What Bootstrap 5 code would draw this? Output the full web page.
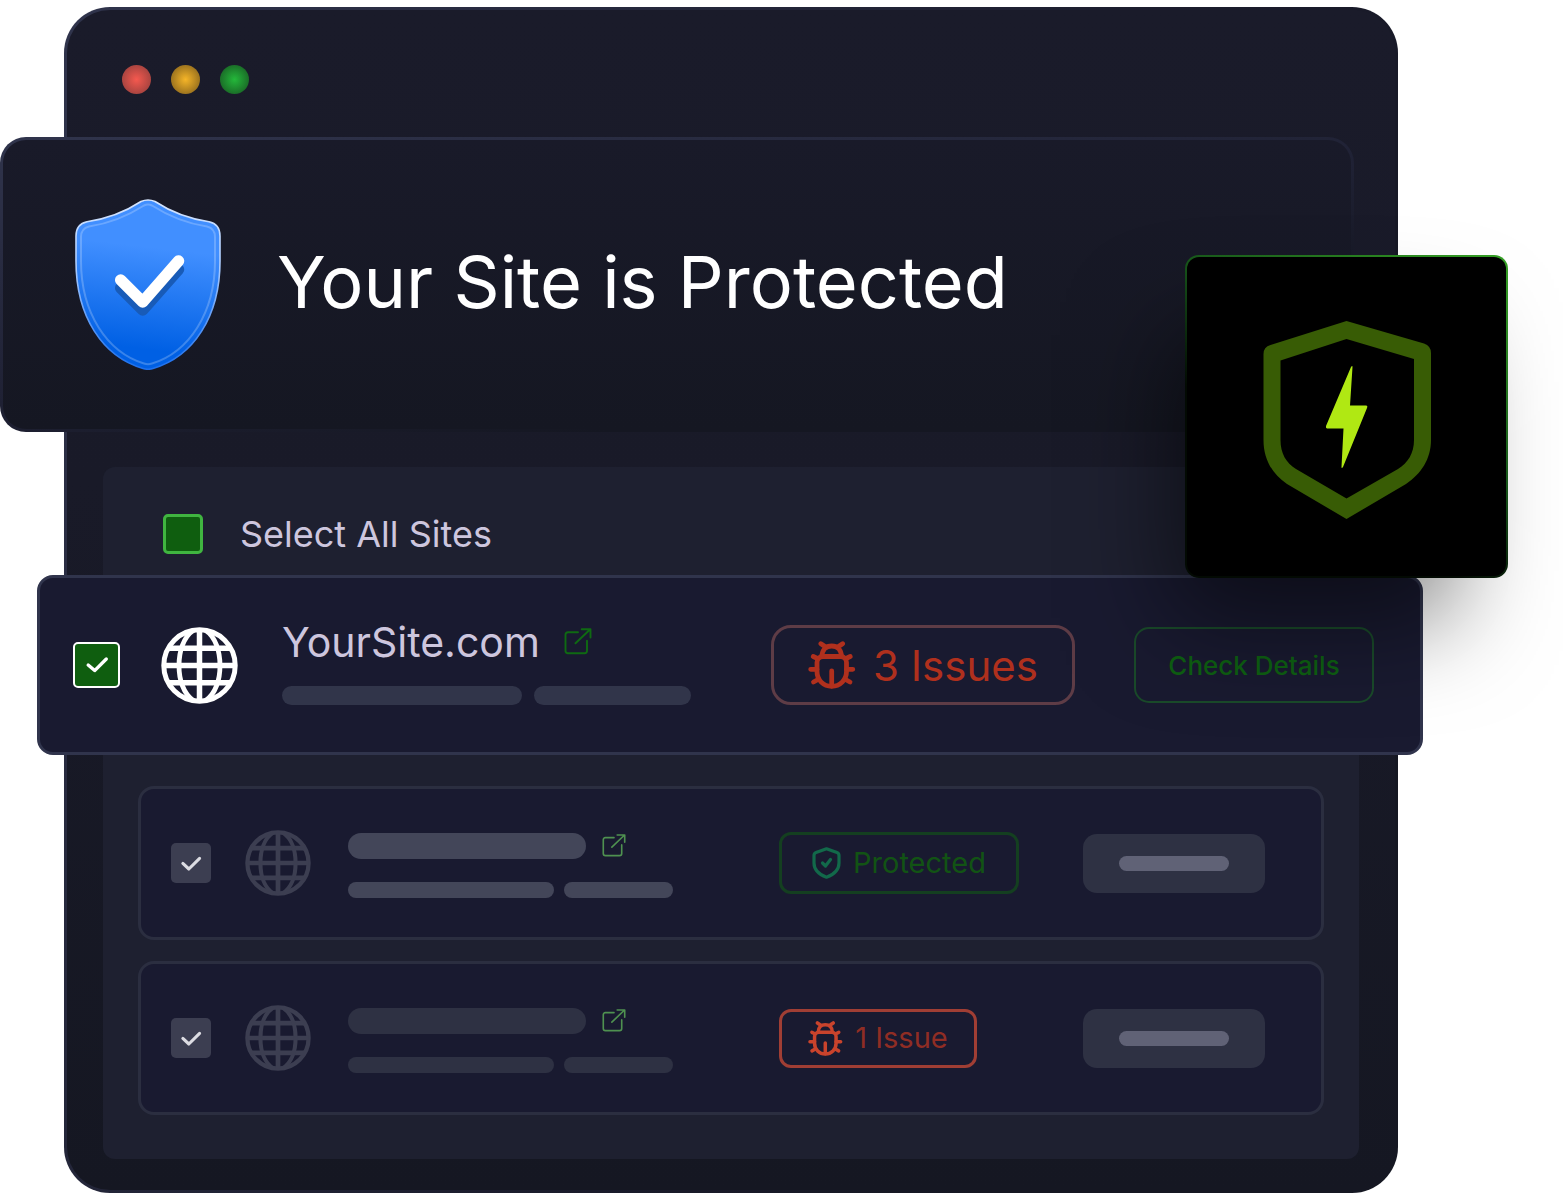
<!DOCTYPE html>
<html lang="en">
<head>
<meta charset="utf-8">
<meta name="viewport" content="width=device-width, initial-scale=1">
<title>Your Site is Protected</title>
<link href="https://cdn.jsdelivr.net/npm/bootstrap@5.3.0/dist/css/bootstrap.min.css" rel="stylesheet">
<style>
  body { font-family: Inter, "Liberation Sans", sans-serif; background: #fff; overflow-x: hidden; }
  .stage { padding: 7px 165px 7px 64px; }

  .app-window {
    border: 3px solid transparent; border-radius: 46px; padding-bottom: 31px;
    background: linear-gradient(180deg, #1a1b2a, #191a28 40%, #151722) padding-box,
                linear-gradient(120deg, #30344c, #1a1b2b 60%, #151722 80%) border-box;
  }
  .title-bar { padding: 55px 55px 43px; gap: 20px; }
  .dot { width: 29px; height: 29px; border-radius: 50%; }
  .dot-red { background: radial-gradient(circle, #f5594f, #a5433f 75%); }
  .dot-amber { background: radial-gradient(circle, #f5b528, #98701e 75%); }
  .dot-green { background: radial-gradient(circle, #24b83a, #1a6a27 75%); }

  .banner {
    height: 295px; margin: 0 41px 0 -67px; padding: 0 72px; gap: 56px;
    border: 3px solid transparent; border-radius: 26px;
    background: linear-gradient(180deg, #191a29, #151722) padding-box,
                linear-gradient(170deg, #30344c, #1f2134 50%, #151722 75%) border-box;
  }
  .banner h1 { font-size: 72px; line-height: 80px; font-weight: 400; color: #fff; padding-bottom: 6px; }

  .panel { margin: 35px 36px 0; padding-bottom: 44px; border-radius: 12px; background: #1e2030; }
  .select-all { height: 108px; padding: 26px 60px 0; gap: 37px; font-size: 36px; line-height: 42px; color: #cdc6de; }

  .site { border: 3px solid #2b2e40; border-radius: 16px; background: #191a30; }
  .site-main { height: 180px; margin: 0 -64px 31px -66px; padding: 0 46px 0 33px; border-color: #30344c; }
  .site-sub { height: 154px; margin: 0 35px; padding: 0 56px 0 30px; }
  .site-sub + .site-sub { margin-top: 21px; }

  .tick {
    appearance: none; flex: none; width: 40px; height: 40px; margin: 0; border-radius: 5px;
    background: #3c3e51 center / 60% no-repeat;
  }
  .tick:checked { background-image: url("data:image/svg+xml,%3Csvg xmlns='http://www.w3.org/2000/svg' viewBox='0 0 28 28'%3E%3Cpath d='M4.500 14.500L11.500 21L24 8.500' fill='none' stroke='%23dcdce2' stroke-width='3.600' stroke-linecap='round' stroke-linejoin='round'/%3E%3C/svg%3E"); }
  .tick-all { border: 3px solid #40b540; background-color: #0f5e0f; }
  .tick-main { width: 47px; height: 46px; border: 2px solid #fff; background-color: #0f5e0f; }
  .tick-main:checked { background-image: url("data:image/svg+xml,%3Csvg xmlns='http://www.w3.org/2000/svg' viewBox='0 0 28 28'%3E%3Cpath d='M4.500 14L11.500 20L24 7.500' fill='none' stroke='%23fff' stroke-width='3.600' stroke-linecap='round' stroke-linejoin='round'/%3E%3C/svg%3E"); }

  .globe { flex: none; width: 66px; height: 66px; margin: 0 37px 0 34px; color: #3c3e51; }
  .site-main .globe { width: 77px; height: 77px; margin: 0 44px 0 41px; color: #fff; }
  .site-name { font-size: 41px; line-height: 50px; font-weight: 400; color: #cdc6de; }
  .open { display: flex; color: #4f9150; }
  .site-main .open { color: #0f6a12; }

  .bones { gap: 10px; margin-top: 23px; }
  .site-main .bones { gap: 12px; margin-top: 19px; }
  .bone { border-radius: 13px; background: #2e3143; }
  .bone-lit { background: #434659; }
  .site-main .bone { height: 19px; background: #31354a; }
  .bone-title { width: 238px; height: 26px; }
  .bone-a { width: 206px; height: 16px; }
  .bone-b { width: 109px; height: 16px; }
  .site-main .bone-a { width: 240px; }
  .site-main .bone-b { width: 157px; }

  .btn.tag { flex: none; display: flex; align-items: center; justify-content: center; padding: 0; white-space: nowrap; font-weight: 400; border-radius: 12px; }
  .btn.tag-issues { width: 304px; height: 80px; margin-right: 59px; gap: 17px; border: 3px solid #5e3c46; border-radius: 20px; font-size: 42px; color: #b0301d; }
  .btn.tag-details { width: 240px; height: 76px; border: 2px solid #1a4a2a; border-radius: 15px; font-size: 26px; font-weight: 500; color: #0e5f12; }
  .status { flex: none; width: 304px; }
  .btn.tag-ok { width: 240px; height: 62px; gap: 12px; border: 3px solid #143f20; font-size: 29px; color: #125314; }
  .btn.tag-warn { width: 198px; height: 59px; gap: 12px; border: 3px solid #a03e34; font-size: 29px; color: #902d24; }
  .btn.ghost { flex: none; width: 182px; height: 59px; padding: 0 36px; border: 0; border-radius: 14px; background: #2e3143; }
  .ghost span { height: 15px; border-radius: 8px; background: #606276; }

  .boost {
    top: 255px; right: 55px; width: 323px; height: 323px; padding-top: 6px;
    border: 2px solid transparent; border-radius: 14px;
    background: linear-gradient(#000, #000) padding-box,
                linear-gradient(215deg, #35a024, #17561a 42%, #030a03 65%) border-box;
    box-shadow: -34px 60px 100px -20px rgba(0, 0, 0, .52);
  }
</style>
</head>
<body>
<svg class="d-none" aria-hidden="true">
  <symbol id="globe" viewBox="0 0 77 77">
    <g fill="none" stroke="currentColor" stroke-width="5.500">
      <circle cx="38.500" cy="38.500" r="35.700" stroke-width="5"/>
      <path d="M38.500 2.500V74.500M2.500 38.500H74.500M7 21.200H70M7 55.800H70"/>
      <path stroke-width="4.800" d="M33 3C22 10 18 25 18 38.500S22 67 33 74M44 3C55 10 59 25 59 38.500S55 67 44 74"/>
    </g>
  </symbol>
  <symbol id="bug" viewBox="0 0 48 48">
    <g fill="none" stroke="currentColor" stroke-width="4.800" stroke-linecap="round" stroke-linejoin="round">
      <path d="M15 15.500H32.500C36 15.500 38.500 18 38.500 21.500V30.500C38.500 39 32 45.300 23.700 45.300S9 39 9 30.500V21.500C9 18 11.500 15.500 15 15.500Z"/>
      <path d="M14 15.500C14 8.500 18 5 23.700 5S33.400 8.500 33.400 15.500M12.900 2.700L17 5.500M34.600 2.700L30.500 5.500"/>
      <path d="M5.300 15.500L9.500 17.500M42.200 15.500L38 17.500M2.700 28.300H9M44.800 28.300H38.500M5.500 41L10 38.500M42 41L37.500 38.500M23.700 30V45"/>
    </g>
  </symbol>
  <symbol id="open" viewBox="0 0 28 28">
    <path fill="none" stroke="currentColor" stroke-width="1.900" stroke-linecap="round" stroke-linejoin="round" d="M14 4.300H4Q1.500 4.300 1.500 6.800V22.700Q1.500 25.200 4 25.200H20.500Q23 25.200 23 22.700V12.700M11.500 15.300L26.300 1.200M17.700 1.200H26.500V9.500"/>
  </symbol>
</svg>

<main class="stage position-relative">
  <section class="app-window">
    <div class="title-bar d-flex">
      <span class="dot dot-red"></span><span class="dot dot-amber"></span><span class="dot dot-green"></span>
    </div>

    <header class="banner d-flex align-items-center">
      <svg class="flex-shrink-0" width="146" height="171" viewBox="0 0 146 171" aria-hidden="true">
        <defs>
          <linearGradient id="blue" x1=".55" y1="0" x2=".45" y2="1"><stop offset=".28" stop-color="#418fff"/><stop offset=".88" stop-color="#0060e4"/></linearGradient>
          <linearGradient id="rim" x1="0" y1="0" x2="0" y2="1"><stop offset="0" stop-color="#d5e5ff"/><stop offset=".4" stop-color="#a9cbff"/><stop offset="1" stop-color="#1c6fec"/></linearGradient>
        </defs>
        <path fill="url(#blue)" stroke="url(#rim)" stroke-width="1.600" d="M66 2.500Q73 -.5 80 2.500C96 13 112 19.500 134 22.700Q145 25 145 37V62C145 118 118 158 78 169.500Q73 171 68 169.500C28 158 1 118 1 62V37Q1 25 12 22.700C34 19.500 50 13 66 2.500Z"/>
        <path fill="none" stroke="#fff" stroke-opacity=".22" stroke-width="2" d="M69 6.500Q73 4.500 77 6.500C95 18 112 24.500 132 27.500Q140 29.500 140 38V62C140 114 114 153 77 164.500Q73 166 69 164.500C32 153 6 114 6 62V38Q6 29.500 14 27.500C34 24.500 51 18 69 6.500Z"/>
        <g fill="none" stroke-width="11.500" stroke-linecap="round" stroke-linejoin="round">
          <path stroke="#185bb8" d="M45.700 89L67.700 111L103.500 70.500"/>
          <path stroke="#fff" d="M45.700 81L67.700 103L103.500 62"/>
        </g>
      </svg>
      <h1 class="m-0 text-nowrap">Your Site is Protected</h1>
    </header>

    <div class="panel">
      <div class="select-all d-flex align-items-center">
        <input class="tick tick-all" type="checkbox" id="all">
        <label for="all" class="text-nowrap">Select All Sites</label>
      </div>

      <article class="site site-main d-flex align-items-center">
        <input class="tick tick-main" type="checkbox" checked aria-label="YourSite.com">
        <svg class="globe" aria-hidden="true"><use href="#globe"/></svg>
        <div class="flex-grow-1 pb-2">
          <div class="d-flex align-items-center gap-4">
            <span class="site-name">YourSite.com</span>
            <a class="open" href="#" aria-label="Open site"><svg width="28" height="28"><use href="#open"/></svg></a>
          </div>
          <div class="bones d-flex"><span class="bone bone-a"></span><span class="bone bone-b"></span></div>
        </div>
        <button type="button" class="btn tag tag-issues"><svg width="48" height="48" aria-hidden="true"><use href="#bug"/></svg>3 Issues</button>
        <button type="button" class="btn tag tag-details">Check Details</button>
      </article>

      <article class="site site-sub d-flex align-items-center">
        <input class="tick" type="checkbox" checked aria-label="Second site">
        <svg class="globe" aria-hidden="true"><use href="#globe"/></svg>
        <div class="flex-grow-1 pt-1">
          <div class="d-flex align-items-center gap-3">
            <span class="bone bone-lit bone-title"></span>
            <a class="open" href="#" aria-label="Open site"><svg width="24" height="24"><use href="#open"/></svg></a>
          </div>
          <div class="bones d-flex"><span class="bone bone-lit bone-a"></span><span class="bone bone-lit bone-b"></span></div>
        </div>
        <div class="status">
          <button type="button" class="btn tag tag-ok">
            <svg width="29" height="32" viewBox="0 0 29 32" fill="none" stroke="#12694a" stroke-width="3.200" stroke-linejoin="round" stroke-linecap="round" aria-hidden="true"><path d="M14.500 1.800L25 5.500Q27 6.200 27 8.500V16C27 23.500 22 27.500 14.500 30.200C7 27.500 2 23.500 2 16V8.500Q2 6.200 4 5.500Z"/><path d="M10.500 16L13.500 19L18.500 12.500"/></svg>Protected</button>
        </div>
        <button type="button" class="btn ghost" aria-label="Details"><span class="d-block"></span></button>
      </article>

      <article class="site site-sub d-flex align-items-center">
        <input class="tick" type="checkbox" checked aria-label="Third site">
        <svg class="globe" aria-hidden="true"><use href="#globe"/></svg>
        <div class="flex-grow-1 pt-1">
          <div class="d-flex align-items-center gap-3">
            <span class="bone bone-title"></span>
            <a class="open" href="#" aria-label="Open site"><svg width="24" height="24"><use href="#open"/></svg></a>
          </div>
          <div class="bones d-flex"><span class="bone bone-a"></span><span class="bone bone-b"></span></div>
        </div>
        <div class="status">
          <button type="button" class="btn tag tag-warn"><svg width="35" height="35" color="#c9432c" aria-hidden="true"><use href="#bug"/></svg>1 Issue</button>
        </div>
        <button type="button" class="btn ghost" aria-label="Details"><span class="d-block"></span></button>
      </article>
    </div>
  </section>

  <aside class="boost position-absolute d-flex align-items-center justify-content-center">
    <svg width="168" height="198" viewBox="0 0 168 198" aria-hidden="true">
      <path fill="#385c05" fill-rule="evenodd" d="M83.500 0L161 22.500Q168 25 168 32V119C168 138 158 153 143 163L83.500 198L24 163C9 153 .5 138 .5 119V33Q.5 26 7.500 24ZM83.500 18L151 38V119C151 132 145 142 135 148L83.500 177.500L33 148C23 142 17.500 132 17.500 119V39.500Z"/>
      <path fill="#b0e813" d="M88 46Q89.500 44 89.500 46L87 84.500H103Q105 84.500 104 87L80 146Q78.500 148 78.500 146L80.500 107.500H64Q62.500 107 63 105Z"/>
    </svg>
  </aside>
</main>
<script src="https://cdn.jsdelivr.net/npm/bootstrap@5.3.0/dist/js/bootstrap.bundle.min.js"></script>
</body>
</html>
